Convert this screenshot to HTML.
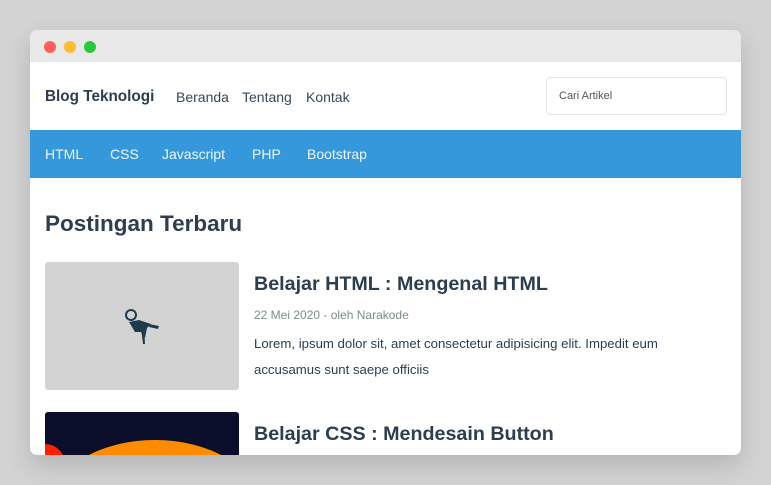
<!DOCTYPE html><html><head><style>
html,body{margin:0;width:771px;height:485px;overflow:hidden}
body{background:#d3d3d3;font-family:"Liberation Sans",sans-serif;position:relative}
.win{position:absolute;left:30px;top:30px;width:711px;height:425px;background:#fff;border-radius:7px;overflow:hidden;box-shadow:0 10px 25px rgba(0,0,0,.15)}
.tb{height:32px;background:#e8e8e8;position:relative}
.d{position:absolute;top:11px;width:12px;height:12px;border-radius:50%}
.hd{height:68px;position:relative;color:#2c3e50}
.brand{position:absolute;left:15px;top:26px;font-weight:bold;font-size:15.3px}
.nav{position:absolute;top:27px;font-size:14px;color:#34495e}
.srch{position:absolute;left:516px;top:15px;width:181px;height:38px;border:1px solid #e4e4e4;border-radius:4px;font-size:11px;color:#555;box-sizing:border-box;padding:12px 12px}
.bar{height:48px;background:#3498db;position:relative;color:#eef6fc;font-size:14px}
.bar span{position:absolute;top:16px}
h1{position:absolute;left:15px;top:181px;margin:0;font-size:22.5px;color:#2c3e50}
.img{position:absolute;left:15px;width:194px;border-radius:3px}
.t{position:absolute;left:224px;font-size:19.7px;font-weight:bold;color:#2c3e50}
</style></head><body><div class="win">
<div class="tb"><div class="d" style="left:14px;background:#fe5f57"></div><div class="d" style="left:34px;background:#febc2e"></div><div class="d" style="left:54px;background:#28c840"></div></div>
<div class="hd"><div class="brand">Blog Teknologi</div><span class="nav" style="left:146px">Beranda</span><span class="nav" style="left:212px">Tentang</span><span class="nav" style="left:276px">Kontak</span><div class="srch">Cari Artikel</div></div>
<div class="bar"><span style="left:15px">HTML</span><span style="left:80px">CSS</span><span style="left:132px">Javascript</span><span style="left:222px">PHP</span><span style="left:277px">Bootstrap</span></div>
<h1>Postingan Terbaru</h1>
<div class="img" style="top:232px;height:128px;background:#d3d3d3"><svg width="194" height="128"><g fill="#1f3a4d"><circle cx="86" cy="53" r="5" fill="none" stroke="#1f3a4d" stroke-width="2"/><path d="M84 60l10 -2 12 4 -4 4 -2 10 -4 -6 -6 0z"/><path d="M96 66l2 16 2 0 -1-16z"/><path d="M104 62l10 2 -1 3 -9-2z"/></g></svg></div>
<div class="t" style="top:243px">Belajar HTML : Mengenal HTML</div>
<div style="position:absolute;left:224px;top:278px;font-size:12px;color:#7f8c8d">22 Mei 2020 - oleh Narakode</div>
<div style="position:absolute;left:224px;top:301px;font-size:13.2px;line-height:26px;color:#2c3e50;width:470px">Lorem, ipsum dolor sit, amet consectetur adipisicing elit. Impedit eum accusamus sunt saepe officiis</div>
<div class="img" style="top:382px;height:60px;background:#0a0e2a;overflow:hidden"><div style="position:absolute;left:10px;top:28px;width:200px;height:120px;border-radius:50%;background:#ff8c00"></div><div style="position:absolute;left:-20px;top:32px;width:40px;height:40px;border-radius:50%;background:#ff2000"></div></div>
<div class="t" style="top:393px">Belajar CSS : Mendesain Button</div>
</div></body></html>
